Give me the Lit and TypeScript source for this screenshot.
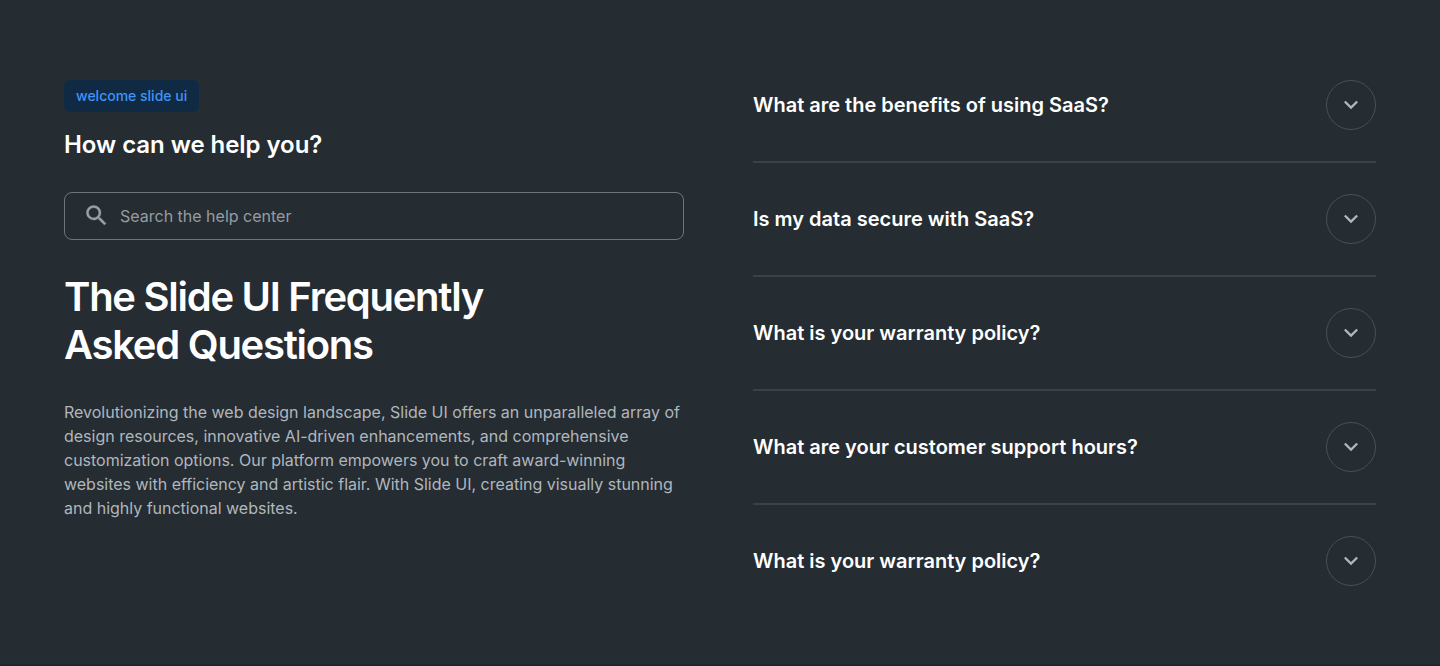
import { LitElement, html, css } from "lit";
import { customElement } from "lit/decorators.js";

const QUESTIONS = [
  "What are the benefits of using SaaS?",
  "Is my data secure with SaaS?",
  "What is your warranty policy?",
  "What are your customer support hours?",
  "What is your warranty policy?",
];

@customElement("app-root")
export class AppRoot extends LitElement {
  static styles = css`
    :host { display: block; font-family: Inter, "Liberation Sans", sans-serif; }
    * { box-sizing: border-box; margin: 0; }
    .page {
      height: 666px; background: #252c32; color: #fff; padding: 80px 64px 0;
      display: flex; justify-content: space-between; align-items: flex-start;
      border-bottom: 2px solid #1f2529; overflow: hidden;
    }
    .intro { width: 620px; display: flex; flex-direction: column; align-items: flex-start; }
    .tag {
      height: 32px; padding: 0 12px; border-radius: 6px; background: #102a43; color: #4094f7;
      font-size: 14px; line-height: 32px; font-weight: 500; white-space: nowrap;
    }
    .help { margin-top: 17px; font-size: 24px; line-height: 32px; font-weight: 600; letter-spacing: -0.05px; white-space: nowrap; }
    .search {
      margin-top: 31px; width: 620px; height: 48px; border: 1px solid #6e757c; border-radius: 8px;
      display: flex; align-items: center; gap: 10px; padding: 0 18px;
      color: #959ca3; font-size: 16px;
    }
    .search svg { width: 27px; height: 27px; margin-bottom: 2px; fill: #9aa1a7; stroke: #9aa1a7; stroke-width: 0.3; }
    .title { margin-top: 33px; font-size: 40px; line-height: 48px; font-weight: 600; letter-spacing: -1.27px; white-space: nowrap; }
    .body { margin-top: 31px; font-size: 16px; line-height: 24px; color: #b0b7bd; white-space: nowrap; letter-spacing: -0.01px; }
    .list { width: 623px; }
    .row { display: flex; justify-content: space-between; align-items: center; height: 50px; }
    .item { padding-bottom: 31px; margin-bottom: 31px; border-bottom: 2px solid #3a4248; }
    .item:last-child { border: 0; }
    .question { font-size: 20px; line-height: 28px; font-weight: 600; white-space: nowrap; }
    .toggle {
      width: 50px; height: 50px; padding: 0; border: 1px solid #485057; border-radius: 50%; background: none;
      display: grid; place-items: center;
    }
    .toggle svg { width: 28px; height: 28px; fill: #b0b7bd; }
  `;

  render() {
    return html`
      <main class="page">
        <section class="intro">
          <span class="tag">welcome slide ui</span>
          <h2 class="help">How can we help you?</h2>
          <div class="search">
            <svg viewBox="0 0 24 24"><path d="M15.5 14h-.79l-.28-.27A6.47 6.47 0 0 0 16 9.5 6.5 6.5 0 1 0 9.5 16c1.61 0 3.09-.59 4.23-1.57l.27.28v.79l5 4.99L20.49 19l-4.99-5zm-6 0C7.01 14 5 11.99 5 9.5S7.01 5 9.5 5 14 7.01 14 9.5 11.99 14 9.5 14z"/></svg>
            <span class="hint">Search the help center</span>
          </div>
          <h1 class="title">The Slide UI Frequently<br>Asked Questions</h1>
          <p class="body">Revolutionizing the web design landscape, Slide UI offers an unparalleled array of<br>design resources, innovative AI-driven enhancements, and comprehensive<br>customization options. Our platform empowers you to craft award-winning<br>websites with efficiency and artistic flair. With Slide UI, creating visually stunning<br>and highly functional websites.</p>
        </section>
        <section class="list">
          ${QUESTIONS.map((q) => html`
            <div class="item"><div class="row">
              <h3 class="question">${q}</h3>
              <button class="toggle" aria-label="Expand">
                <svg viewBox="0 0 24 24"><path d="M7.41 8.29 12 12.87l4.59-4.58L18 9.7l-6 6-6-6z"/></svg>
              </button>
            </div></div>`)}
        </section>
      </main>`;
  }
}
